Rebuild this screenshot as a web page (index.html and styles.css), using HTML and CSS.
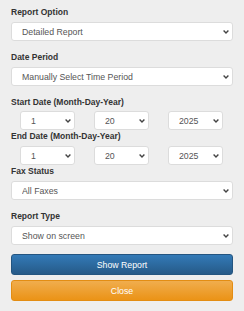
FILE: index.html
```html
<!DOCTYPE html>
<html lang="en">
<head>
  <meta charset="UTF-8" />
  <title>Fax Report</title>
  <link rel="stylesheet" href="styles.css">
</head>
<body>
  <form class="panel">
    <div class="field">
      <label class="field-label" for="option">Report Option</label>
      <div class="select-wrap">
        <select class="form-select" id="option"><option>Detailed Report</option></select>
        <svg class="chev" width="6" height="4" viewBox="0 0 6 4"><path d="M0.6 0.6 L3 3 L5.4 0.6" fill="none" stroke="#444" stroke-width="1.4"/></svg>
      </div>
    </div>

    <div class="field">
      <label class="field-label" for="period">Date Period</label>
      <div class="select-wrap">
        <select class="form-select" id="period"><option>Manually Select Time Period</option></select>
        <svg class="chev" width="6" height="4" viewBox="0 0 6 4"><path d="M0.6 0.6 L3 3 L5.4 0.6" fill="none" stroke="#444" stroke-width="1.4"/></svg>
      </div>
    </div>

    <label class="field-label date-label">Start Date (Month-Day-Year)</label>
    <div class="date-row">
      <div class="select-wrap">
        <select class="form-select"><option>1</option></select>
        <svg class="chev" width="6" height="4" viewBox="0 0 6 4"><path d="M0.6 0.6 L3 3 L5.4 0.6" fill="none" stroke="#444" stroke-width="1.4"/></svg>
      </div>
      <div class="select-wrap">
        <select class="form-select"><option>20</option></select>
        <svg class="chev" width="6" height="4" viewBox="0 0 6 4"><path d="M0.6 0.6 L3 3 L5.4 0.6" fill="none" stroke="#444" stroke-width="1.4"/></svg>
      </div>
      <div class="select-wrap">
        <select class="form-select"><option>2025</option></select>
        <svg class="chev" width="6" height="4" viewBox="0 0 6 4"><path d="M0.6 0.6 L3 3 L5.4 0.6" fill="none" stroke="#444" stroke-width="1.4"/></svg>
      </div>
    </div>

    <label class="field-label">End Date (Month-Day-Year)</label>
    <div class="date-row">
      <div class="select-wrap">
        <select class="form-select"><option>1</option></select>
        <svg class="chev" width="6" height="4" viewBox="0 0 6 4"><path d="M0.6 0.6 L3 3 L5.4 0.6" fill="none" stroke="#444" stroke-width="1.4"/></svg>
      </div>
      <div class="select-wrap">
        <select class="form-select"><option>20</option></select>
        <svg class="chev" width="6" height="4" viewBox="0 0 6 4"><path d="M0.6 0.6 L3 3 L5.4 0.6" fill="none" stroke="#444" stroke-width="1.4"/></svg>
      </div>
      <div class="select-wrap">
        <select class="form-select"><option>2025</option></select>
        <svg class="chev" width="6" height="4" viewBox="0 0 6 4"><path d="M0.6 0.6 L3 3 L5.4 0.6" fill="none" stroke="#444" stroke-width="1.4"/></svg>
      </div>
    </div>

    <div class="field">
      <label class="field-label" for="status">Fax Status</label>
      <div class="select-wrap">
        <select class="form-select" id="status"><option>All Faxes</option></select>
        <svg class="chev" width="6" height="4" viewBox="0 0 6 4"><path d="M0.6 0.6 L3 3 L5.4 0.6" fill="none" stroke="#444" stroke-width="1.4"/></svg>
      </div>
    </div>

    <div class="field field-last">
      <label class="field-label" for="type">Report Type</label>
      <div class="select-wrap">
        <select class="form-select" id="type"><option>Show on screen</option></select>
        <svg class="chev" width="6" height="4" viewBox="0 0 6 4"><path d="M0.6 0.6 L3 3 L5.4 0.6" fill="none" stroke="#444" stroke-width="1.4"/></svg>
      </div>
    </div>

    <button type="button" class="btn btn-primary">Show Report</button>
    <button type="button" class="btn btn-warning">Close</button>
  </form>
</body>
</html>
```

FILE: styles.css
```css
* {
  box-sizing: border-box;
}

body {
  margin: 0;
  background-color: #eeeeee;
  font-family: "Liberation Sans", Arial, sans-serif;
  color: #333;
}

.panel {
  padding: 6px 11px 0;
}

.field {
  margin-bottom: 10px;
}

.field-last {
  margin-bottom: 9px;
}

.field-label {
  display: block;
  font-size: 8.5px;
  font-weight: bold;
  line-height: 12px;
  margin-bottom: 4px;
}

.date-label {
  margin-bottom: 3px;
}

.select-wrap {
  position: relative;
}

.form-select {
  display: block;
  width: 100%;
  height: 19px;
  padding: 0 10px;
  border: 1px solid #dcdcdc;
  border-radius: 3px;
  background-color: #fff;
  color: #555;
  font-family: "Liberation Sans", Arial, sans-serif;
  font-size: 8.75px;
  appearance: none;
  -webkit-appearance: none;
  outline: none;
}

.chev {
  position: absolute;
  right: 4px;
  top: 8px;
  pointer-events: none;
}

.date-row {
  display: grid;
  grid-template-columns: repeat(3, 1fr);
}

.date-row .select-wrap {
  width: 55px;
  margin-left: 9px;
}

.btn {
  display: block;
  width: 100%;
  height: 21px;
  color: #fff;
  font-family: "Liberation Sans", Arial, sans-serif;
  font-size: 8.75px;
  border-radius: 3px;
  cursor: pointer;
}

.btn-primary {
  background-image: linear-gradient(#337ab7, #265a88);
  border: 1px solid #245580;
}

.btn-warning {
  margin-top: 5px;
  background-image: linear-gradient(#f0ad4e, #eb9316);
  border: 1px solid #e38d13;
}
```
